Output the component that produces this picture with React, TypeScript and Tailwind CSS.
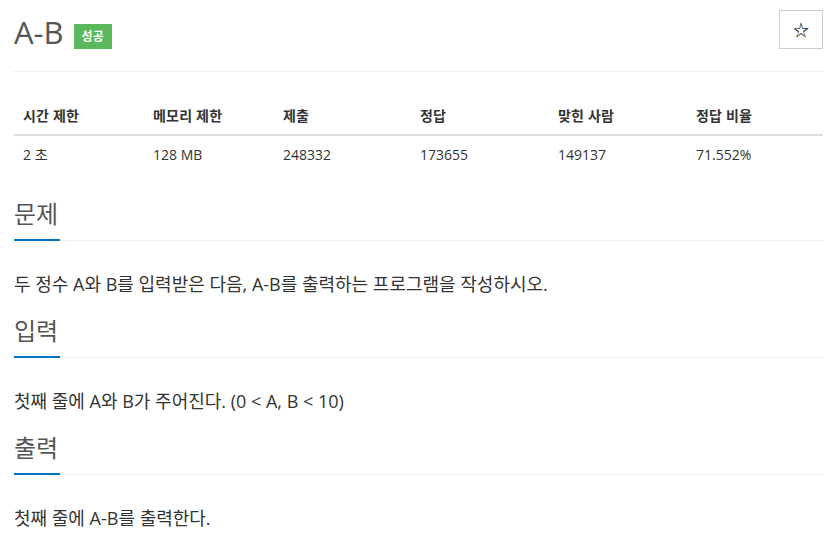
import React from "react";

const font = { fontFamily: '"Open Sans", "Noto Sans CJK KR", sans-serif' };

function Section({ title, text, first }: { title: string; text: string; first?: boolean }) {
  return (
    <div>
      <div className={`${first ? "mt-[22px]" : "mt-[16px]"} border-b border-dotted border-[#ddd] flex`}>
        <h2 className="text-[24px] leading-[34px] text-[#555] border-b-2 border-[#0076c0] -mb-px pb-[8px] pr-[2px]">
          {title}
        </h2>
      </div>
      <p className="text-[18px] leading-[27px] text-[#333] mt-[30px]">{text}</p>
    </div>
  );
}

export default function App() {
  const heads = ["시간 제한", "메모리 제한", "제출", "정답", "맞힌 사람", "정답 비율"];
  const vals = ["2 초", "128 MB", "248332", "173655", "149137", "71.552%"];
  const widths = ["w-[130px]", "w-[130px]", "w-[137px]", "w-[138px]", "w-[138px]", ""];
  return (
    <div className="bg-white min-h-[556px] pl-[14px] pr-[12px] pt-[9px]" style={font}>
      <div className="flex justify-between items-start border-b border-[#eee] pb-[22px]">
        <div className="flex items-center pt-[6px]">
          <h1 className="text-[31px] leading-[34px] text-[#555]">A-B</h1>
          <span className="ml-[10px] mt-[8px] bg-[#5cb85c] text-white text-[12px] font-bold leading-[25px] px-[8px] h-[25px]">
            성공
          </span>
        </div>
        <button className="mt-[1px] w-[44px] h-[39px] border border-[#ccc] bg-white flex items-center justify-center text-[16px] text-black">
          ☆
        </button>
      </div>
      <table className="mt-[26px] w-full text-[14px] text-[#333] border-collapse">
        <thead>
          <tr className="border-b-2 border-[#ddd]">
            {heads.map((h, i) => (
              <th key={i} className={`${widths[i]} text-left font-bold px-[9px] py-[8px] leading-[20px] tracking-[0.2px]`}>
                {h}
              </th>
            ))}
          </tr>
        </thead>
        <tbody>
          <tr>
            {vals.map((v, i) => (
              <td key={i} className="text-left px-[9px] pt-[9px] pb-[10px] leading-[20px]">
                {v}
              </td>
            ))}
          </tr>
        </tbody>
      </table>
      <Section first title="문제" text="두 정수 A와 B를 입력받은 다음, A-B를 출력하는 프로그램을 작성하시오." />
      <Section title="입력" text="첫째 줄에 A와 B가 주어진다. (0 < A, B < 10)" />
      <Section title="출력" text="첫째 줄에 A-B를 출력한다." />
    </div>
  );
}
